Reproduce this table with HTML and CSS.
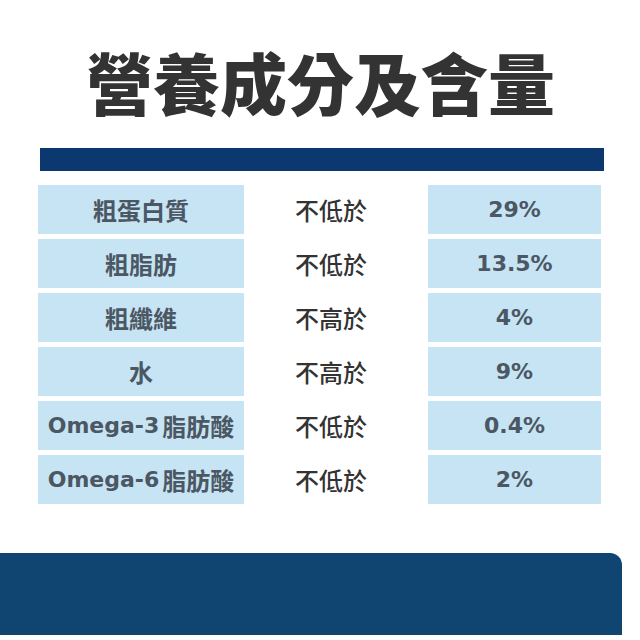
FILE: index.html
```html
<!DOCTYPE html>
<html lang="zh-Hant">
<head>
<meta charset="utf-8">
<title>營養成分及含量</title>
<link rel="stylesheet" href="styles.css">
</head>
<body>
<div class="page">
  <h1 class="title">營養成分及含量</h1>
  <div class="bar"></div>
  <div class="table">
    <div class="cell name">粗蛋白質</div><div class="cond">不低於</div><div class="cell val">29%</div>
    <div class="cell name">粗脂肪</div><div class="cond">不低於</div><div class="cell val">13.5%</div>
    <div class="cell name">粗纖維</div><div class="cond">不高於</div><div class="cell val">4%</div>
    <div class="cell name">水</div><div class="cond">不高於</div><div class="cell val">9%</div>
    <div class="cell name"><span class="lat">Omega-3</span>脂肪酸</div><div class="cond">不低於</div><div class="cell val">0.4%</div>
    <div class="cell name"><span class="lat">Omega-6</span>脂肪酸</div><div class="cond">不低於</div><div class="cell val">2%</div>
  </div>
  <div class="footer"></div>
</div>
</body>
</html>
```
FILE: styles.css
```css
html, body {
  margin: 0;
  padding: 0;
  background: #ffffff;
}
.page {
  width: 640px;
  height: 640px;
  overflow: hidden;
  display: flex;
  flex-direction: column;
  font-family: "Noto Sans CJK TC", "Noto Sans CJK SC", sans-serif;
}
.title {
  margin: 0;
  padding-top: 47px;
  height: 67px;
  font-size: 67px;
  line-height: 67px;
  font-weight: 900;
  color: #333333;
  text-align: center;
  padding-left: 1px;
}
.bar {
  margin: 34px 0 0 40px;
  width: 564px;
  height: 23px;
  background: #0c3870;
}
.table {
  margin: 14px 0 0 38px;
  display: grid;
  grid-template-columns: 206px 184px 173px;
  grid-auto-rows: 49px;
  row-gap: 5px;
}
.cell {
  background: #c6e4f4;
  display: flex;
  align-items: center;
  justify-content: center;
  color: #4b5763;
  font-weight: 700;
}
.name {
  font-size: 24px;
}
.lat {
  font-family: "DejaVu Sans", "Noto Sans CJK TC", sans-serif;
  font-size: 22px;
  margin-right: 3px;
}
.val {
  font-family: "DejaVu Sans", "Noto Sans CJK TC", sans-serif;
  font-size: 22px;
}
.cond {
  display: flex;
  align-items: center;
  padding-left: 51px;
  font-size: 24px;
  font-weight: 500;
  color: #333333;
}
.footer {
  margin-top: 49px;
  width: 622px;
  height: 82px;
  background: #104471;
  border-top-right-radius: 12px;
}
```
